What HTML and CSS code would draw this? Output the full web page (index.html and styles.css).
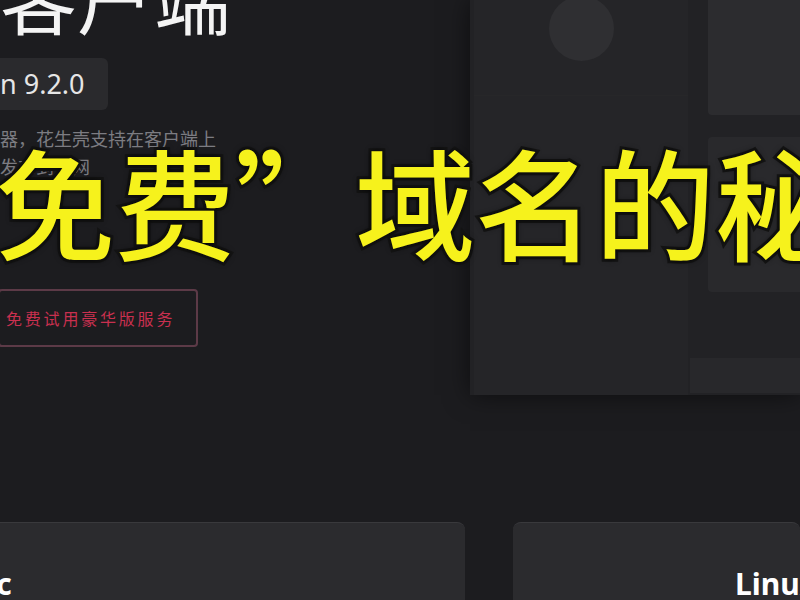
FILE: index.html
```html
<!DOCTYPE html>
<html lang="zh-CN">
<head>
<meta charset="UTF-8">
<meta name="viewport" content="width=device-width, initial-scale=1.0">
<title>花生壳客户端</title>

<link rel="stylesheet" href="styles.css">
</head>

<body>

<div class="page">

    <div class="hero">
        <div class="intro">
            <h1 class="title">客户端</h1>
            <div class="version">n 9.2.0</div>
            <p class="desc">器，花生壳支持在客户端上<br>发布到公网</p>
            <button class="trial">免费试用豪华版服务</button>
        </div>

        <div class="preview">
            <div class="preview-main">
                <div class="avatar"></div>
                <div class="preview-line"></div>
            </div>
            <div class="preview-side">
                <div class="side-block"></div>
                <div class="side-block second"></div>
                <div class="side-bar"></div>
            </div>
        </div>
    </div>

    <div class="platforms">
        <div class="card mac"><span>Mac</span></div>
        <div class="card linux"><span>Linux</span></div>
    </div>

    <div class="caption">“免费”域名的秘密</div>

</div>

</body>
</html>
```

FILE: styles.css
```css
body {
    margin: 0;
    background: #1c1c1f;
    font-family: "Noto Sans", "Noto Sans CJK SC", sans-serif;
    overflow: hidden;
}

.page {
    position: relative;
    width: 800px;
    height: 600px;
    overflow: hidden;
    display: flex;
    flex-direction: column;
}

.hero {
    display: flex;
    justify-content: space-between;
    height: 522px;
}

.intro {
    width: 470px;
}

.title {
    margin: -43px 0 0 0;
    font-family: "Noto Sans CJK SC", sans-serif;
    font-weight: 400;
    font-size: 77px;
    line-height: 77px;
    color: #f4f4f4;
}

.version {
    margin-top: 24px;
    width: 108px;
    height: 52px;
    line-height: 52px;
    background: #2a2a2d;
    border-radius: 0 6px 6px 0;
    font-size: 27px;
    color: #e6e6e6;
}

.desc {
    margin: 14px 0 0 0;
    font-family: "Noto Sans CJK SC", sans-serif;
    font-size: 18px;
    line-height: 28px;
    color: #7c7c82;
}

.trial {
    display: block;
    margin: 109px 0 0 -2px;
    width: 200px;
    height: 58px;
    padding: 0 0 0 6px;
    text-align: left;
    background: transparent;
    border: 2px solid #5c3a47;
    border-radius: 4px;
    font-family: "Noto Sans CJK SC", sans-serif;
    font-size: 16px;
    letter-spacing: 2.8px;
    color: #c9304f;
}

.preview {
    width: 330px;
    height: 395px;
    display: flex;
    gap: 20px;
    padding-left: 4px;
    box-sizing: border-box;
    background: #222225;
    box-shadow: 0 0 24px rgba(0, 0, 0, 0.55);
}

.preview-main {
    width: 214px;
    display: flex;
    flex-direction: column;
    align-items: center;
    background: #252528;
}

.avatar {
    width: 65px;
    height: 65px;
    margin-top: -4px;
    border-radius: 50%;
    background: #2f2f32;
}

.preview-line {
    width: 100%;
    height: 1px;
    margin-top: 34px;
    background: #272729;
}

.preview-side {
    flex: 1;
    display: flex;
    flex-direction: column;
}

.side-block {
    height: 115px;
    background: #2c2c2f;
    border-radius: 0 0 0 4px;
}

.side-block.second {
    margin-top: 22px;
    height: 155px;
    background: #29292c;
    border-radius: 4px 0 0 4px;
}

.side-bar {
    margin: 66px 0 0 -18px;
    height: 35px;
    background: #28282b;
}

.platforms {
    display: flex;
    gap: 48px;
    flex: 1;
}

.card {
    background: #2b2b2e;
    border-top: 1px solid #39393c;
    border-radius: 8px 8px 0 0;
    overflow: hidden;
    font-weight: 700;
    font-size: 30px;
    color: #ffffff;
    line-height: 1;
    padding-top: 46px;
    box-sizing: border-box;
}

.mac {
    width: 465px;
    border-radius: 0 8px 0 0;
}

.mac span {
    display: inline-block;
    margin-left: -50px;
}

.linux {
    flex: 1;
}

.linux span {
    display: inline-block;
    margin-left: 222px;
}

.caption {
    position: absolute;
    left: -125px;
    top: 140px;
    white-space: nowrap;
    font-family: "Noto Sans CJK SC", sans-serif;
    font-weight: 500;
    font-size: 120px;
    line-height: 120px;
    color: #f6f21c;
    -webkit-text-stroke: 6px #141414;
    paint-order: stroke fill;
    text-shadow: 0 0 6px rgba(0, 0, 0, 0.8);
}
```
